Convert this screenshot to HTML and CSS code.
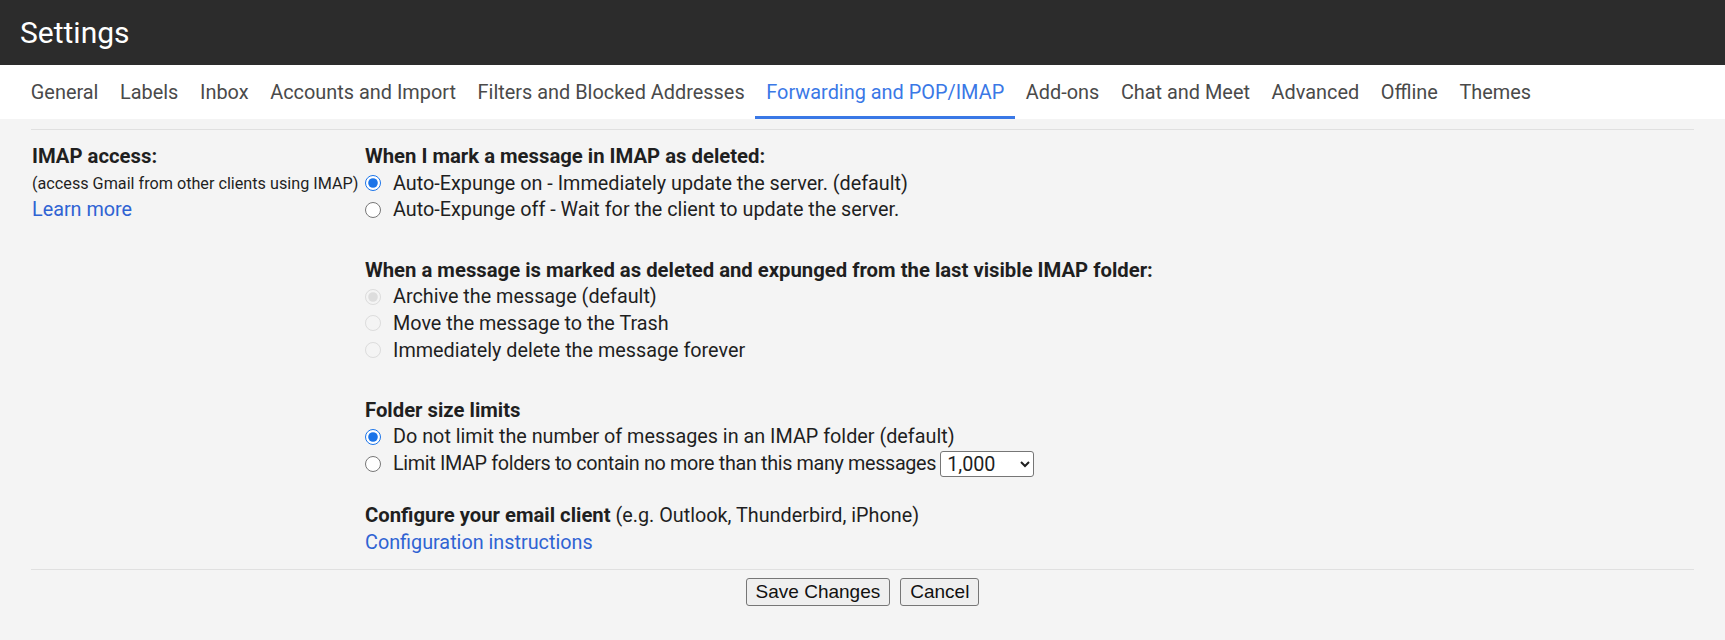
FILE: index.html
```html
<!DOCTYPE html>
<html>
<head>
<meta charset="utf-8">
<link rel="stylesheet" href="styles.css">
</head>
<body>
<header class="topbar"><h1 class="title">Settings</h1></header>
<nav class="tabs">
  <a class="tab">General</a>
  <a class="tab">Labels</a>
  <a class="tab">Inbox</a>
  <a class="tab">Accounts and Import</a>
  <a class="tab">Filters and Blocked Addresses</a>
  <a class="tab active">Forwarding and POP/IMAP</a>
  <a class="tab">Add-ons</a>
  <a class="tab">Chat and Meet</a>
  <a class="tab">Advanced</a>
  <a class="tab">Offline</a>
  <a class="tab">Themes</a>
</nav>
<main class="content">
  <div class="rule"></div>
  <section class="setting">
    <div class="label-col">
      <div class="line strong">IMAP access:</div>
      <div class="line small">(access Gmail from other clients using IMAP)</div>
      <div class="line"><a class="link">Learn more</a></div>
    </div>
    <div class="options-col">
      <div class="group">
        <div class="line strong">When I mark a message in IMAP as deleted:</div>
        <label class="line opt"><input type="radio" name="g1" checked><span>Auto-Expunge on - Immediately update the server. (default)</span></label>
        <label class="line opt"><input type="radio" name="g1"><span>Auto-Expunge off - Wait for the client to update the server.</span></label>
      </div>
      <div class="group">
        <div class="line strong">When a message is marked as deleted and expunged from the last visible IMAP folder:</div>
        <label class="line opt"><input type="radio" name="g2" checked disabled><span>Archive the message (default)</span></label>
        <label class="line opt"><input type="radio" name="g2" disabled><span>Move the message to the Trash</span></label>
        <label class="line opt"><input type="radio" name="g2" disabled><span>Immediately delete the message forever</span></label>
      </div>
      <div class="group">
        <div class="line strong">Folder size limits</div>
        <label class="line opt"><input type="radio" name="g3" checked><span>Do not limit the number of messages in an IMAP folder (default)</span></label>
        <label class="line opt"><input type="radio" name="g3"><span class="tight">Limit IMAP folders to contain no more than this many messages</span>
          <select class="sel"><option>1,000</option></select></label>
      </div>
      <div class="group last">
        <div class="line text"><b class="strong">Configure your email client</b> (e.g. Outlook, Thunderbird, iPhone)</div>
        <div class="line"><a class="link">Configuration instructions</a></div>
      </div>
    </div>
  </section>
  <div class="rule bottom"></div>
  <div class="actions">
    <button class="btn">Save Changes</button>
    <button class="btn">Cancel</button>
  </div>
</main>
</body>
</html>
```
FILE: styles.css
```css
html, body {
  margin: 0;
  padding: 0;
  background: #f4f4f4;
}
body {
  font-family: Roboto, "Liberation Sans", Arial, sans-serif;
  color: #1f1f1f;
  width: 1725px;
  height: 640px;
  overflow: hidden;
}
.topbar {
  height: 65px;
  background: #2c2c2c;
  display: flex;
  align-items: center;
  padding-left: 20px;
}
.title {
  margin: 0;
  font-weight: 400;
  font-size: 30px;
  color: #ffffff;
  line-height: 1;
}
.tabs {
  height: 54px;
  background: #ffffff;
  display: flex;
  padding-left: 20px;
}
.tab {
  display: flex;
  align-items: center;
  padding: 3px 10.8px 0;
  font-size: 19.9px;
  color: #4a4a4a;
  border-bottom: 3px solid transparent;
  white-space: nowrap;
}
.tab.active {
  color: #3a78e6;
  border-bottom-color: #3a78e6;
}
.content {
  padding: 0 31px;
}
.rule {
  height: 1px;
  background: #e0e0e0;
  margin-top: 10px;
}
.rule.bottom {
  margin-top: 13px;
}
.setting {
  display: grid;
  grid-template-columns: 333px 1fr;
  padding-top: 13px;
  padding-left: 1px;
}
.line {
  display: flex;
  align-items: center;
  height: 26.8px;
  font-size: 19.8px;
  white-space: nowrap;
}
.line.text {
  display: block;
  line-height: 26.8px;
}
.strong {
  font-weight: 700;
}
.line.strong,
.line .strong {
  font-size: 20.3px;
}
.small {
  font-size: 16.2px;
}
.tight {
  letter-spacing: -0.35px;
}
.link {
  color: #2f63d3;
  cursor: pointer;
}
.group {
  margin-bottom: 33px;
}
.group:nth-child(3) {
  margin-bottom: 25px;
}
.group.last {
  margin-bottom: 0;
}
.opt input {
  margin: 0 12px 0 0;
  width: 16px;
  height: 16px;
  accent-color: #1a73e8;
}
.opt input:disabled {
  opacity: 0.6;
}
.sel {
  margin-left: 4px;
  width: 94px;
  height: 26px;
  padding-left: 2px;
  font-family: Roboto, "Liberation Sans", Arial, sans-serif;
  font-size: 19.8px;
  color: #1f1f1f;
  background: #ffffff;
  border: 1px solid #767676;
  border-radius: 3px;
}
.actions {
  display: flex;
  justify-content: center;
  gap: 10px;
  margin-top: 8px;
}
.btn {
  height: 28px;
  padding: 0 9px;
  font-family: "Liberation Sans", Arial, sans-serif;
  font-size: 19px;
  color: #111;
  background: #efefef;
  border: 1px solid #767676;
  border-radius: 3px;
}
```
